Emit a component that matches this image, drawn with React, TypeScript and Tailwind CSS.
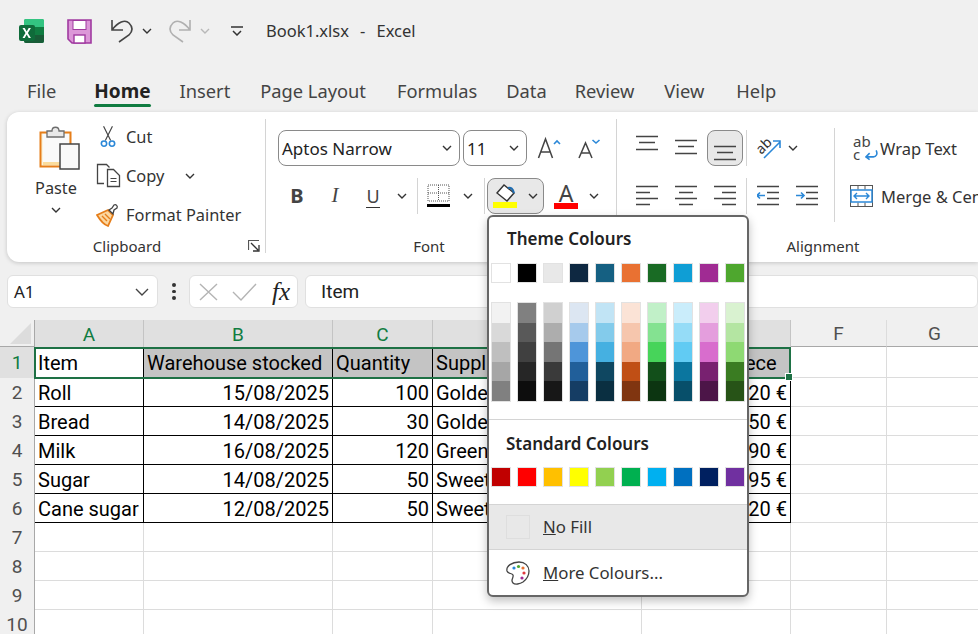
import type { ReactNode } from "react";

const THEME = [
  "bg-[#ffffff]", "bg-[#000000]", "bg-[#e8e8e8]", "bg-[#0e2841]", "bg-[#156082]",
  "bg-[#e97132]", "bg-[#196b24]", "bg-[#0f9ed5]", "bg-[#a02b93]", "bg-[#4ea72e]",
];

const SHADES = [
  ["bg-[#f2f2f2]", "bg-[#d9d9d9]", "bg-[#bfbfbf]", "bg-[#a6a6a6]", "bg-[#808080]"],
  ["bg-[#808080]", "bg-[#595959]", "bg-[#404040]", "bg-[#262626]", "bg-[#0d0d0d]"],
  ["bg-[#d0d0d0]", "bg-[#adadad]", "bg-[#757575]", "bg-[#3a3a3a]", "bg-[#171717]"],
  ["bg-[#dce6f2]", "bg-[#a6caec]", "bg-[#4e95d9]", "bg-[#215f9a]", "bg-[#153d64]"],
  ["bg-[#c1e4f5]", "bg-[#83cbeb]", "bg-[#45b0e1]", "bg-[#0f4761]", "bg-[#0a2f41]"],
  ["bg-[#fbe3d6]", "bg-[#f6c6ad]", "bg-[#f1a983]", "bg-[#c04f15]", "bg-[#803510]"],
  ["bg-[#c1f0c8]", "bg-[#84e291]", "bg-[#47d45a]", "bg-[#124f1a]", "bg-[#0c3511]"],
  ["bg-[#caedfb]", "bg-[#95dcf7]", "bg-[#61cbf3]", "bg-[#0b769f]", "bg-[#074f6a]"],
  ["bg-[#f2ceed]", "bg-[#e49edd]", "bg-[#d86dcd]", "bg-[#782170]", "bg-[#4c1548]"],
  ["bg-[#d9f2d0]", "bg-[#b4e5a2]", "bg-[#8ed973]", "bg-[#3a7c22]", "bg-[#275317]"],
];

const STANDARD = [
  "bg-[#c00000]", "bg-[#ff0000]", "bg-[#ffc000]", "bg-[#ffff00]", "bg-[#92d050]",
  "bg-[#00b050]", "bg-[#00b0f0]", "bg-[#0070c0]", "bg-[#002060]", "bg-[#7030a0]",
];

const ROWS = [
  ["Item", "Warehouse stocked", "Quantity", "Supplier", "Price per piece"],
  ["Roll", "15/08/2025", "100", "Golden", "0,20 €"],
  ["Bread", "14/08/2025", "30", "Golden", "2,50 €"],
  ["Milk", "16/08/2025", "120", "Green", "0,90 €"],
  ["Sugar", "14/08/2025", "50", "Sweet", "1,95 €"],
  ["Cane sugar", "12/08/2025", "50", "Sweet", "2,20 €"],
];

const COLS = "grid-cols-[35px_109px_189px_100px_209px_149px_96px_96px]";
const SHEET_FONT = "font-['Roboto',sans-serif]";

function Chevron({ className = "text-[#333]" }: { className?: string }) {
  return (
    <svg width="10" height="6" viewBox="0 0 10 6" className={className}>
      <path d="M1 1l4 4 4-4" fill="none" stroke="currentColor" strokeWidth="1.4" />
    </svg>
  );
}

function ChevronBox({ className = "w-[20px]" }: { className?: string }) {
  return (
    <div className={`flex h-[36px] items-center justify-center ${className}`}>
      <Chevron />
    </div>
  );
}

function ExcelLogo() {
  return (
    <svg width="25" height="25" viewBox="0 0 25 25">
      <rect x="5" y="0" width="20" height="24" rx="2" fill="#21a366" />
      <path d="M5 2a2 2 0 012-2h16a2 2 0 012 2v6H5z" fill="#33c481" />
      <rect x="15" y="8" width="10" height="8" fill="#107c41" />
      <path d="M5 16h20v6a2 2 0 01-2 2H7a2 2 0 01-2-2z" fill="#185c37" />
      <rect x="0" y="6" width="16" height="16" rx="2" fill="#0f6b3a" />
      <path d="M3.500 9l3 5-3 5h2.200l2-3.600 2 3.600h2.200l-3-5 3-5h-2.200l-2 3.400-2-3.400z" fill="#fff" />
    </svg>
  );
}

function SaveIcon() {
  return (
    <svg width="25" height="25" viewBox="0 0 25 25">
      <path d="M1 1h23v23H5l-4-4z" fill="#dc97d8" stroke="#a03aa0" strokeWidth="1.6" />
      <rect x="6" y="1.500" width="13" height="9" fill="#fff" stroke="#a03aa0" strokeWidth="1" />
      <rect x="7" y="16" width="11" height="8" fill="#fff" stroke="#a03aa0" strokeWidth="1.400" />
    </svg>
  );
}

function UndoIcon({ mirrored, color }: { mirrored?: boolean; color: string }) {
  return (
    <svg width="24" height="24" viewBox="0 0 24 24" className={mirrored ? "-scale-x-100" : ""}>
      <path d="M2 1v10h11M2 11C8 3 15 0 19 4c5 5 3 9 0 12L9 23" fill="none" stroke={color} strokeWidth="1.600" />
    </svg>
  );
}

function PasteIcon() {
  return (
    <svg width="50" height="47" viewBox="0 0 50 47">
      <rect x="9.500" y="8.500" width="30" height="34" fill="#faf3dc" stroke="#e67e1a" strokeWidth="2" />
      <rect x="12" y="10" width="26" height="29" fill="#fafafa" />
      <path d="M12 38h17v3H12z" fill="#fbdc9c" />
      <path d="M16 13v-6h5c0-5 7-5 7 0h5v6z" fill="#e9e9e9" stroke="#6d6d6d" strokeWidth="1.300" />
      <rect x="29" y="20" width="19" height="25" fill="#f9f9f9" stroke="#444" strokeWidth="1.500" />
    </svg>
  );
}

function CutIcon() {
  return (
    <svg width="16" height="25" viewBox="0 0 18 25">
      <path d="M4 1l8 16M14 1L6 17" fill="none" stroke="#444" strokeWidth="1.300" />
      <circle cx="4.500" cy="20.500" r="3" fill="none" stroke="#2b88d8" strokeWidth="1.800" />
      <circle cx="13.500" cy="20.500" r="3" fill="none" stroke="#2b88d8" strokeWidth="1.800" />
    </svg>
  );
}

function CopyIcon() {
  return (
    <svg width="25" height="25" viewBox="0 0 25 25">
      <path d="M8 20.500H1.500V1.500h9l3 3" fill="none" stroke="#444" strokeWidth="1.300" />
      <path d="M11.500 6.500h6l6 6v11h-12z" fill="#fff" stroke="#444" strokeWidth="1.300" />
      <path d="M14.500 15.500h6M14.500 18.500h6" stroke="#444" strokeWidth="1.200" />
    </svg>
  );
}

function PainterIcon() {
  return (
    <svg width="24" height="24" viewBox="0 0 24 24">
      <path d="M1 12l11-5 5 5-5 11c-3-1-8-6-11-11z" fill="#fbd7a0" stroke="#e67e1a" strokeWidth="1.800" />
      <path d="M6 13l5 5M9 11l5 5" stroke="#e67e1a" strokeWidth="1.400" />
      <path d="M13 7l3-2 2-3c2-1 4 1 3 3l-3 2-1 4z" fill="#fff" stroke="#444" strokeWidth="1.300" />
    </svg>
  );
}

function Launcher() {
  return (
    <svg width="12" height="12" viewBox="0 0 12 12">
      <path d="M.5 10V.5H11" fill="none" stroke="#555" strokeWidth="1.200" />
      <path d="M3 3l7 7M5 11h6V5" fill="none" stroke="#333" strokeWidth="1.300" />
    </svg>
  );
}

function GrowIcon({ shrink }: { shrink?: boolean }) {
  return (
    <svg width="24" height="24" viewBox="0 0 24 24">
      {shrink ? (
        <>
          <path d="M1 22L7.500 7 14 22M3.200 17h8.600" fill="none" stroke="#444" strokeWidth="1.500" />
          <path d="M14.500 4l3.500 3 3.500-3" fill="none" stroke="#2b88d8" strokeWidth="1.600" />
        </>
      ) : (
        <>
          <path d="M1.500 22L8.500 3l7 19M3.800 16h9.400" fill="none" stroke="#444" strokeWidth="1.500" />
          <path d="M17 8l3-3 3 3" fill="none" stroke="#2b88d8" strokeWidth="1.600" />
        </>
      )}
    </svg>
  );
}

function BorderIcon() {
  return (
    <svg width="23" height="24" viewBox="0 0 23 24">
      <path d="M1 1h21v16H1zM11.500 1v16M1 9h21" fill="none" stroke="#555" strokeWidth="1" strokeDasharray="1 1" />
      <rect x="0" y="20" width="23" height="3" fill="#000" />
    </svg>
  );
}

function BucketIcon() {
  return (
    <svg width="24" height="18" viewBox="0 0 24 18">
      <path d="M11 1L4 9l10 8 7-8z" fill="#fff" stroke="#333" strokeWidth="1.400" />
      <path d="M15 4c3-1 5 1 6 5" fill="none" stroke="#1f6cb0" strokeWidth="2" />
    </svg>
  );
}

function VAlign({ pos }: { pos: "top" | "middle" | "bottom" }) {
  const offset = pos === "top" ? 0 : pos === "middle" ? 4 : 10;
  return (
    <svg width="22" height="26" viewBox="0 0 22 26">
      <path
        d={`M0 ${offset + 1.500}h22M3 ${offset + 7.500}h16M0 ${offset + 14.500}h22`}
        stroke="#444"
        strokeWidth="1.400"
      />
    </svg>
  );
}

function HAlign({ pos }: { pos: "left" | "center" | "right" }) {
  const short = pos === "left" ? "M0" : pos === "center" ? "M4" : "M8";
  return (
    <svg width="22" height="22" viewBox="0 0 22 22">
      <path d={`M0 1.500h22${short} 7.500h14M0 13.500h22${short} 19.500h14`} stroke="#444" strokeWidth="1.400" />
    </svg>
  );
}

function IndentIcon({ increase }: { increase?: boolean }) {
  return (
    <svg width="22" height="22" viewBox="0 0 22 22">
      <path d="M0 1.500h22M10 7.500h12M10 13.500h12M0 19.500h22" stroke="#444" strokeWidth="1.400" />
      {increase ? (
        <path d="M0 10.500h8M5 7.500l3 3-3 3" fill="none" stroke="#2b88d8" strokeWidth="1.600" />
      ) : (
        <path d="M8 10.500H0M3 7.500l-3 3 3 3" fill="none" stroke="#2b88d8" strokeWidth="1.600" />
      )}
    </svg>
  );
}

function OrientationIcon() {
  return (
    <svg width="26" height="26" viewBox="0 0 26 26">
      <text x="0" y="15" fontSize="14" fill="#333" transform="rotate(-45 9 10)" fontFamily="Noto Sans, sans-serif">
        ab
      </text>
      <path d="M9 23L25 7M18 6h7v7" fill="none" stroke="#2b88d8" strokeWidth="1.600" />
    </svg>
  );
}

function WrapIcon() {
  return (
    <div className="relative h-[26px] w-[24px] text-[15px] leading-[13px] text-[#444]">
      <div>ab</div>
      <div>c</div>
      <svg width="13" height="12" viewBox="0 0 14 12" className="absolute bottom-0 right-[-1px]">
        <path d="M12 1c2 4 0 7-3 7H2M5 4L1 8l4 3" fill="none" stroke="#2b88d8" strokeWidth="1.700" />
      </svg>
    </div>
  );
}

function MergeIcon() {
  return (
    <svg width="24" height="23" viewBox="0 0 24 23">
      <rect x=".5" y=".5" width="22" height="21" fill="#fff" stroke="#555" />
      <path d="M8 .5v4M15 .5v4M8 17.500v4M15 17.500v4" stroke="#555" />
      <rect x="1" y="5" width="21" height="12" fill="#fff" stroke="#2b88d8" strokeWidth="1.500" />
      <path d="M4 11h15M7 8l-3 3 3 3M16 8l3 3-3 3" fill="none" stroke="#2b88d8" strokeWidth="1.400" />
    </svg>
  );
}

function PaletteIcon() {
  return (
    <svg width="24" height="24" viewBox="0 0 24 24">
      <path
        d="M13 1C6 1 0 5 1 10c1 3 5 2 6 4 1 3-3 5 0 8 2 2 7 1 10-1 4-3 6-7 6-11 0-5-4-9-10-9z"
        fill="#fff"
        stroke="#444"
        strokeWidth="1.300"
      />
      <circle cx="8" cy="7" r="1.600" fill="#2b88d8" />
      <circle cx="12.500" cy="5.500" r="1.600" fill="#4ea72e" />
      <circle cx="17" cy="7" r="1.600" fill="#e97132" />
      <circle cx="18" cy="12" r="1.600" fill="#e0393e" />
      <circle cx="16" cy="17" r="1.600" fill="#a02b93" />
    </svg>
  );
}

function RibbonDivider({ className }: { className: string }) {
  return <div className={`w-px shrink-0 bg-[#d4d4d4] ${className}`} />;
}

function GroupLabel({ children, className }: { children: ReactNode; className: string }) {
  return <div className={`h-[24px] text-center text-[15px] leading-[24px] text-[#333] ${className}`}>{children}</div>;
}

function IconBox({ children, className = "w-[36px]" }: { children: ReactNode; className?: string }) {
  return <div className={`flex h-[36px] shrink-0 items-center justify-center ${className}`}>{children}</div>;
}

function SelectBox({ value, className }: { value: string; className: string }) {
  return (
    <div className={`flex h-[36px] items-center justify-between rounded-lg border border-[#8a8a8a] bg-white pl-[3px] pr-[7px] text-[#222] ${className}`}>
      <span className="pt-px text-[17px]">{value}</span>
      <Chevron />
    </div>
  );
}

function ClipboardGroup() {
  const items = [
    { icon: <CutIcon />, label: "Cut", indent: "pl-[4px]" },
    { icon: <CopyIcon />, label: "Copy", chevron: true, indent: "" },
    { icon: <PainterIcon />, label: "Format Painter", indent: "" },
  ];
  return (
    <div className="w-[258px] shrink-0">
      <div className="flex h-[122px]">
        <div className="ml-[24px] flex w-[50px] flex-col items-center pt-[12px]">
          <PasteIcon />
          <div className="mt-[5px] text-[16.300px] leading-[24px] text-[#333]">Paste</div>
          <div className="mt-[7px]">
            <Chevron />
          </div>
        </div>
        <div className="ml-[15px] pt-[5px]">
          {items.map((item) => (
            <div key={item.label} className="flex h-[39px] items-center">
              <div className={`flex w-[30px] justify-start ${item.indent}`}>{item.icon}</div>
              <span className="pt-px text-[16.400px] text-[#333]">{item.label}</span>
              {item.chevron && (
                <div className="ml-[21px]">
                  <Chevron />
                </div>
              )}
            </div>
          ))}
        </div>
      </div>
      <div className="flex">
        <GroupLabel className="flex-1">Clipboard</GroupLabel>
        <div className="flex h-[24px] w-[18px] items-center pl-px">
          <Launcher />
        </div>
      </div>
    </div>
  );
}

function FontGroup() {
  return (
    <div className="w-[350px] shrink-0 pl-[12px]">
      <div className="h-[122px] pt-[18px]">
        <div className="flex items-center">
          <SelectBox value="Aptos Narrow" className="w-[182px]" />
          <SelectBox value="11" className="ml-[3px] w-[64px]" />
          <div className="ml-[10px]">
            <GrowIcon />
          </div>
          <div className="ml-[17px]">
            <GrowIcon shrink />
          </div>
        </div>
        <div className="mt-[12px] flex h-[36px] items-center">
          <IconBox className="w-[38px]">
            <span className="text-[20px] font-bold text-[#444]">B</span>
          </IconBox>
          <IconBox className="w-[38px]">
            <span className="font-['Liberation_Serif',serif] text-[21px] italic text-[#444]">I</span>
          </IconBox>
          <IconBox className="w-[38px]">
            <span className="border-b border-[#333] text-[18px] leading-[22px] text-[#444]">U</span>
          </IconBox>
          <ChevronBox />
          <RibbonDivider className="ml-[5px] h-[36px]" />
          <div className="ml-[9px]">
            <BorderIcon />
          </div>
          <ChevronBox className="ml-[8px] w-[20px]" />
          <RibbonDivider className="ml-[6px] h-[36px]" />
          <div className="ml-[2px] flex h-[36px] w-[57px] items-center rounded-lg border border-[#8a8a8a] bg-[#e8e8e8] pl-[5px]">
            <div className="flex w-[24px] flex-col">
              <BucketIcon />
              <div className="h-[6px] w-[24px] bg-[#ffff00]" />
            </div>
            <div className="ml-[11px]">
              <Chevron />
            </div>
          </div>
          <div className="ml-[10px] flex w-[24px] flex-col items-center">
            <span className="text-[23px] leading-[20px] text-[#444]">A</span>
            <div className="h-[6px] w-[24px] bg-[#ff0000]" />
          </div>
          <ChevronBox className="ml-[6px] w-[20px]" />
        </div>
      </div>
      <GroupLabel className="pr-[36px]">Font</GroupLabel>
    </div>
  );
}

function AlignmentGroup() {
  return (
    <div className="w-[412px] shrink-0">
      <div className="flex h-[122px]">
        <div className="w-[217px] shrink-0 pl-[12px] pt-[18px]">
          <div className="flex h-[36px] items-center">
            <IconBox>
              <VAlign pos="top" />
            </IconBox>
            <IconBox className="ml-[3px] w-[36px]">
              <VAlign pos="middle" />
            </IconBox>
            <IconBox className="ml-[3px] w-[36px] rounded-lg border border-[#8a8a8a] bg-[#e8e8e8]">
              <VAlign pos="bottom" />
            </IconBox>
            <RibbonDivider className="ml-[3px] h-[36px]" />
            <div className="ml-[8px]">
              <OrientationIcon />
            </div>
            <ChevronBox className="ml-[2px] w-[20px]" />
          </div>
          <div className="mt-[12px] flex h-[36px] items-center">
            <IconBox>
              <HAlign pos="left" />
            </IconBox>
            <IconBox className="ml-[3px] w-[36px]">
              <HAlign pos="center" />
            </IconBox>
            <IconBox className="ml-[3px] w-[36px]">
              <HAlign pos="right" />
            </IconBox>
            <RibbonDivider className="ml-[3px] h-[36px]" />
            <IconBox className="ml-[3px] w-[36px]">
              <IndentIcon />
            </IconBox>
            <IconBox className="ml-[3px] w-[36px]">
              <IndentIcon increase />
            </IconBox>
          </div>
        </div>
        <RibbonDivider className="mt-[16px] h-[94px]" />
        <div className="pt-[18px]">
          <div className="ml-[18px] flex h-[36px] items-center">
            <WrapIcon />
            <span className="ml-[3px] pt-[2px] text-[16.500px] text-[#333]">Wrap Text</span>
          </div>
          <div className="ml-[15px] mt-[12px] flex h-[36px] items-center">
            <MergeIcon />
            <span className="ml-[7px] whitespace-nowrap pt-[2px] text-[16.500px] text-[#333]">Merge &amp; Center</span>
          </div>
        </div>
      </div>
      <GroupLabel className="">Alignment</GroupLabel>
    </div>
  );
}

function FormulaBar() {
  return (
    <div className="mt-[13px] flex h-[33px] pl-[7px]">
      <div className="flex w-[151px] items-center justify-between rounded-md border border-[#e0e0e0] bg-white pl-[6px] pr-[8px]">
        <span className="pt-px text-[17px] text-[#222]">A1</span>
        <svg width="14" height="8" viewBox="0 0 14 8">
          <path d="M1 1l6 6 6-6" fill="none" stroke="#444" strokeWidth="1.400" />
        </svg>
      </div>
      <div className="flex w-[31px] flex-col items-center justify-center gap-[3px] pl-px">
        <div className="h-[3.500px] w-[3.500px] rounded-full bg-[#333]" />
        <div className="h-[3.500px] w-[3.500px] rounded-full bg-[#333]" />
        <div className="h-[3.500px] w-[3.500px] rounded-full bg-[#333]" />
      </div>
      <div className="flex w-[109px] items-center rounded-md border border-[#e0e0e0] bg-white pl-[9px]">
        <svg width="19" height="18" viewBox="0 0 19 18">
          <path d="M1 1l17 16M18 1L1 17" stroke="#b4b4b4" strokeWidth="1.400" />
        </svg>
        <svg width="25" height="18" viewBox="0 0 25 18" className="ml-[14px]">
          <path d="M1 9l8 8L24 1" fill="none" stroke="#b4b4b4" strokeWidth="1.400" />
        </svg>
        <span className="ml-[15px] font-['Liberation_Serif',serif] text-[25px] italic leading-none text-[#222]">fx</span>
      </div>
      <div className="ml-[7px] flex flex-1 items-center rounded-md border border-[#e0e0e0] bg-white pl-[15px]">
        <span className={`pt-px text-[19px] text-[#222] ${SHEET_FONT}`}>Item</span>
      </div>
    </div>
  );
}

function ColumnHeaders() {
  const heads = ["A", "B", "C", "D", "E", "F", "G"];
  return (
    <>
      <div className="flex h-[27px] items-end justify-end border-b border-r border-[#a8a8a8] pb-[2px] pr-[3px]">
        <svg width="21" height="21" viewBox="0 0 21 21">
          <path d="M21 0v21H0z" fill="#dcdcdc" />
        </svg>
      </div>
      {heads.map((head, i) => (
        <div
          key={head}
          className={`flex h-[27px] items-center justify-center border-r pt-[3px] text-[19px] ${
            i < 5
              ? "border-[#c4c4c4] bg-[#e0e0e0] text-[#107c41]"
              : "border-b border-r-[#dcdcdc] border-b-[#a8a8a8] bg-[#f0f0f0] text-[#505050]"
          }`}
        >
          {head}
        </div>
      ))}
    </>
  );
}

function DataRow({ cells, index }: { cells: string[]; index: number }) {
  const header = index === 0;
  return (
    <>
      <div
        className={`flex items-center justify-center border-r border-[#a8a8a8] pt-[2px] text-[19px] ${
          header ? "bg-[#e0e0e0] text-[#107c41]" : "bg-[#f0f0f0] text-[#505050]"
        } ${header ? "h-[31px]" : "h-[29px]"}`}
      >
        {index + 1}
      </div>
      {cells.map((cell, c) => {
        const right = !header && (c === 1 || c === 2 || c === 4);
        return (
          <div
            key={c}
            className={`flex items-center overflow-hidden whitespace-nowrap border-b border-r border-black px-[3px] pt-[2px] text-[20px] text-black ${
              right ? "justify-end" : "justify-start"
            } ${header ? "h-[31px]" : "h-[29px]"} ${header && c > 0 ? "bg-[#c4c4c4]" : "bg-white"}`}
          >
            {cell}
          </div>
        );
      })}
      <div className={`border-b border-r border-[#dcdcdc] bg-white ${header ? "h-[31px]" : "h-[29px]"}`} />
      <div className={`border-b border-r border-[#dcdcdc] bg-white ${header ? "h-[31px]" : "h-[29px]"}`} />
    </>
  );
}

function EmptyRow({ index }: { index: number }) {
  return (
    <>
      <div className="flex h-[29px] items-center justify-center border-r border-[#a8a8a8] bg-[#f0f0f0] pt-[2px] text-[19px] text-[#505050]">
        {index}
      </div>
      {[0, 1, 2, 3, 4, 5, 6].map((c) => (
        <div key={c} className="h-[29px] border-b border-r border-[#dcdcdc] bg-white" />
      ))}
    </>
  );
}

function Sheet() {
  return (
    <div className={`relative mt-[12px] grid ${COLS} ${SHEET_FONT}`}>
      <ColumnHeaders />
      {ROWS.map((cells, i) => (
        <DataRow key={i} cells={cells} index={i} />
      ))}
      {[7, 8, 9, 10].map((n) => (
        <EmptyRow key={n} index={n} />
      ))}
      {/* selection outline over row 1 */}
      <div className="absolute left-[34px] top-[27px] h-[32px] w-[757px] border-2 border-[#1e7145]">
        <div className="absolute -bottom-[4px] -right-[4px] h-[8px] w-[8px] border border-white bg-[#1e7145]" />
      </div>
    </div>
  );
}

function FillPopup() {
  return (
    <div className="absolute left-[487px] top-[215px] flex h-[382px] w-[262px] flex-col rounded-md border-2 border-[#666] bg-white shadow-[0_4px_10px_rgba(0,0,0,0.25)]">
      <div className="pl-[18px] pt-[10px] text-[17px] font-semibold leading-[24px] text-[#222]">Theme Colours</div>
      <div className="ml-[2px] mt-[12px] flex gap-[6px]">
        {THEME.map((color) => (
          <div key={color} className={`h-[20px] w-[20px] border border-[#e2e2e2] ${color}`} />
        ))}
      </div>
      <div className="ml-[2px] mt-[19px] flex gap-[6px]">
        {SHADES.map((col, i) => (
          <div key={i} className="flex h-[100px] w-[20px] flex-col border border-[#e2e2e2]">
            {col.map((color) => (
              <div key={color} className={`flex-1 ${color}`} />
            ))}
          </div>
        ))}
      </div>
      <div className="mt-[17px] border-t border-[#d4d4d4] pl-[17px] pt-[12px] text-[17px] font-semibold leading-[24px] text-[#222]">
        Standard Colours
      </div>
      <div className="ml-[2px] mt-[11px] flex gap-[6px]">
        {STANDARD.map((color) => (
          <div key={color} className={`h-[20px] w-[20px] border border-[#e2e2e2] ${color}`} />
        ))}
      </div>
      <div className="mt-[17px] flex h-[46px] items-center border-y border-[#d4d4d4] bg-[#e8e8e8] pl-[17px]">
        <div className="h-[24px] w-[24px] border border-[#dedede]" />
        <span className="ml-[13px] text-[16.800px] text-[#333]">
          <span className="underline">N</span>o Fill
        </span>
      </div>
      <div className="flex flex-1 items-center pl-[17px]">
        <PaletteIcon />
        <span className="ml-[13px] text-[16.800px] text-[#333]">
          <span className="underline">M</span>ore Colours...
        </span>
      </div>
    </div>
  );
}

export default function App() {
  const tabs = [
    { label: "File", className: "ml-[27px]" },
    { label: "Home", className: "ml-[38px]", active: true },
    { label: "Insert", className: "ml-[29px]" },
    { label: "Page Layout", className: "ml-[30px]" },
    { label: "Formulas", className: "ml-[31px]" },
    { label: "Data", className: "ml-[29px]" },
    { label: "Review", className: "ml-[28px]" },
    { label: "View", className: "ml-[30px]" },
    { label: "Help", className: "ml-[32px]" },
  ];

  return (
    <div className="relative h-[634px] w-[978px] overflow-hidden bg-[#f0f0f0] font-['Noto_Sans',sans-serif]">
      {/* title bar */}
      <div className="flex h-[62px] items-center pl-[19px]">
        <ExcelLogo />
        <div className="ml-[23px]">
          <SaveIcon />
        </div>
        <div className="ml-[18px]">
          <UndoIcon color="#444" />
        </div>
        <div className="ml-[8px]">
          <Chevron />
        </div>
        <div className="ml-[16px]">
          <UndoIcon mirrored color="#b0b0b0" />
        </div>
        <div className="ml-[8px]">
          <Chevron className="text-[#b8b8b8]" />
        </div>
        <svg width="12" height="10" viewBox="0 0 12 10" className="ml-[21px]">
          <path d="M0 1h12M2 5l4 4 4-4" fill="none" stroke="#333" strokeWidth="1.500" />
        </svg>
        <span className="ml-[23px] whitespace-pre text-[16.500px] text-[#333] [word-spacing:1.250px]">Book1.xlsx  -  Excel</span>
      </div>

      {/* tabs */}
      <div className="flex h-[50px] pt-[16px]">
        {tabs.map((tab) => (
          <div key={tab.label} className={`flex flex-col ${tab.className}`}>
            <span className={`leading-[26px] ${tab.active ? "text-[19px] font-bold text-[#222]" : "text-[18.300px] text-[#444]"}`}>
              {tab.label}
            </span>
            {tab.active && <div className="h-[3px] rounded-full bg-[#107c41]" />}
          </div>
        ))}
      </div>

      {/* ribbon */}
      <div className="ml-[7px] flex h-[150px] rounded-l-xl bg-white shadow-[0_1px_4px_rgba(0,0,0,0.18)]">
        <ClipboardGroup />
        <RibbonDivider className="mt-[7px] h-[134px]" />
        <FontGroup />
        <RibbonDivider className="mt-[7px] h-[134px]" />
        <AlignmentGroup />
      </div>

      <FormulaBar />
      <Sheet />
      <FillPopup />
    </div>
  );
}
